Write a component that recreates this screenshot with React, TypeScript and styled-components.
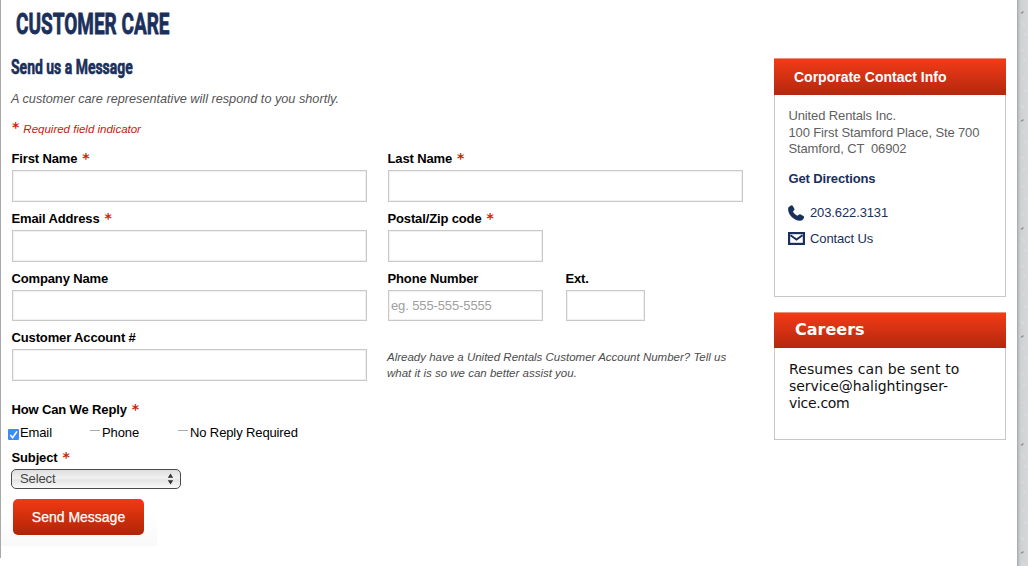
import React from "react";
import styled, { createGlobalStyle } from "styled-components";

const Global = createGlobalStyle`
  * { box-sizing: border-box; }
  body { margin: 0; background: #fff; font-family: "Liberation Sans", Arial, sans-serif; overflow: hidden; }
`;

const Page = styled.div`
  display: flex;
  width: 1028px;
  height: 566px;
  background: #fff;
`;
const LeftRule = styled.div`
  width: 1px;
  height: 558px;
  background: #a9a9a9;
`;
const Main = styled.main`
  width: 762px;
  height: 566px;
  display: flex;
  flex-direction: column;
  padding-left: 10px;
`;
const Side = styled.aside`
  width: 254px;
  padding: 58px 0 0 11px;
`;
const Texture = styled.div`
  flex: 1;
  height: 566px;
  display: flex;
  background: linear-gradient(90deg, #a6a7a8 0, #c4c5c7 2px, #d1d2d4 4px, #d5d6d8 11px);
`;

const Line = styled.div<{ $spacing?: number }>`
  white-space: pre;
  letter-spacing: ${(p) => p.$spacing ?? 0}px;
`;
const Title = styled.h1`
  margin: 6px 0 0 5px;
  height: 36px;
  font: 700 29px/36px Roboto, sans-serif;
  color: #1a2f5a;
  white-space: nowrap;
  transform: scaleX(0.655);
  transform-origin: 0 0;
  -webkit-text-stroke: 0.8px #1a2f5a;
`;
const Subtitle = styled.h2`
  margin: 13px 0 0;
  height: 24px;
  font: 700 20px/24px Roboto, sans-serif;
  color: #1a2f5a;
  white-space: nowrap;
  transform: scaleX(0.698);
  transform-origin: 0 0;
  -webkit-text-stroke: 0.6px #1a2f5a;
`;
const Intro = styled(Line)`
  margin-top: 12px;
  font: italic 12.7px/16px "Liberation Sans", sans-serif;
  color: #555;
`;
const Required = styled(Line)`
  margin: 13px 0 0 1px;
  height: 18px;
  display: flex;
  gap: 4px;
  font: italic 11.5px/18px "Liberation Sans", sans-serif;
  color: #c8190a;
`;
const Star = styled.span`
  font: 700 14px/15px "DejaVu Sans", sans-serif;
  letter-spacing: 0;
  color: #cc2209;
`;

const Fields = styled.div`
  display: grid;
  grid-template-columns: 355px 355px;
  grid-template-rows: 64px 60px 59px 60px;
  column-gap: 21px;
  padding-left: 1px;
`;
const Split = styled.div`
  display: flex;
  gap: 23px;
`;
const Field = styled.div<{ $width?: number }>`
  display: flex;
  flex-direction: column;
  justify-content: flex-end;
  width: ${(p) => p.$width ?? 355}px;
`;
const Label = styled.label`
  display: flex;
  gap: 5px;
  height: 15px;
  margin: 0 0 4px -0.5px;
  font: 700 13px/15px "Liberation Sans", sans-serif;
  letter-spacing: -0.14px;
  color: #000;
  white-space: nowrap;
`;
const Input = styled.input<{ $height?: number }>`
  display: block;
  width: 100%;
  height: ${(p) => p.$height ?? 32}px;
  padding: 0 2px;
  border: 1px solid #c9c9c9;
  box-shadow: inset 0 0 0 1px #f1f1f1;
  border-radius: 0;
  outline: none;
  background: #fff;
  font: 13px "Liberation Sans", sans-serif;
  letter-spacing: -0.12px;
  &::placeholder { color: #a0a0a0; opacity: 1; }
`;
const Hint = styled.div`
  padding-top: 28px;
  margin-left: -1px;
  font: italic 11.5px/16px "Liberation Sans", sans-serif;
  color: #4c4c4c;
`;

const ReplyLabel = styled(Label)`
  margin: 21px 0 0 0.5px;
`;
const Options = styled.div`
  display: flex;
  height: 17px;
  margin-top: 7px;
  margin-left: -3px;
`;
const Option = styled.label<{ $width: number }>`
  display: flex;
  width: ${(p) => p.$width}px;
  font: 13px/17px "Liberation Sans", sans-serif;
  letter-spacing: -0.12px;
  color: #000;
  white-space: nowrap;
`;
const Check = styled.svg`
  width: 11px;
  height: 11px;
  margin: 5px 1px 0 0;
`;
const Dash = styled.span`
  width: 10px;
  height: 10px;
  margin: 6px 2px 0 0;
  border-top: 1px solid #aaa;
`;
const SubjectLabel = styled(Label)`
  margin: 9px 0 0 0.5px;
`;
const Select = styled.div`
  display: flex;
  justify-content: space-between;
  align-items: center;
  width: 170px;
  height: 20px;
  margin: 4px 0 0;
  padding: 0 6px 1px 8px;
  border: 1.5px solid #4b4b4b;
  border-radius: 5px;
  background: linear-gradient(#ddd, #f1f1f1 45%, #e4e4e4 55%, #fafafa);
  font: 13px/17px "Liberation Sans", sans-serif;
  letter-spacing: -0.1px;
  color: #444;
`;
const Footer = styled.div`
  width: 156px;
  height: 57px;
  margin-left: -10px;
  padding: 10px 0 0 12px;
  background: linear-gradient(#fff 40%, #f9f9f9);
`;
const Send = styled.button`
  display: block;
  width: 131px;
  height: 36px;
  padding: 0;
  border: 0;
  border-radius: 5px;
  background: linear-gradient(#f13a13, #b02407);
  color: #fff;
  font: 14px/36px "Liberation Sans", sans-serif;
  -webkit-text-stroke: 0.25px #fff;
`;

const Card = styled.section<{ $height: number }>`
  width: 232px;
  height: ${(p) => p.$height}px;
  margin-bottom: 15px;
  border: 1px solid #c8c8c8;
  border-top: 0;
  background: #fff;
`;
const CardHead = styled.h3<{ $verdana?: boolean }>`
  height: ${(p) => (p.$verdana ? 36 : 37)}px;
  margin: 0 -1px;
  padding-left: ${(p) => (p.$verdana ? 21 : 20)}px;
  border: 1px solid #ee8f7c;
  border-width: 1px 0 0;
  background: linear-gradient(#f23b17, #b4270e);
  color: #fff;
  font: 700 ${(p) => (p.$verdana ? '16px/34px "DejaVu Sans"' : '14px/36px "Liberation Sans"')}, sans-serif;
  white-space: nowrap;
`;
const Address = styled.div`
  padding: 13px 0 0 13.5px;
  font: 13px/16.5px "Liberation Sans", sans-serif;
  color: #5f5f5f;
`;
const Directions = styled.a`
  display: block;
  margin: 13px 0 0 13.5px;
  font: 700 13px/16px "Liberation Sans", sans-serif;
  letter-spacing: -0.14px;
  color: #1a2f5a;
`;
const ContactRow = styled.a<{ $top: number }>`
  display: flex;
  align-items: center;
  gap: 5px;
  height: 18px;
  margin: ${(p) => p.$top}px 0 0 13px;
  font: 13px/18px "Liberation Sans", sans-serif;
  letter-spacing: -0.12px;
  color: #1a2f5a;
`;
const Resumes = styled.div`
  padding: 13px 0 0 14px;
  font: 14px/17px "DejaVu Sans", sans-serif;
  color: #111;
`;

function TextField({ label, required, width, height, placeholder }: {
  label: string; required?: boolean; width?: number; height?: number; placeholder?: string;
}) {
  return (
    <Field $width={width}>
      <Label>{label}{required && <Star>*</Star>}</Label>
      <Input $height={height} placeholder={placeholder} />
    </Field>
  );
}

export default function App() {
  return (
    <Page>
      <Global />
      <LeftRule />
      <Main>
        <Title>CUSTOMER CARE</Title>
        <Subtitle>Send us a Message</Subtitle>
        <Intro>A customer care representative will respond to you shortly.</Intro>
        <Required><Star>*</Star>Required field indicator</Required>
        <Fields>
          <TextField label="First Name" required />
          <TextField label="Last Name" required />
          <TextField label="Email Address" required />
          <TextField label="Postal/Zip code" required width={155} />
          <TextField label="Company Name" height={31} />
          <Split>
            <TextField label="Phone Number" width={155} height={31} placeholder="eg. 555-555-5555" />
            <TextField label="Ext." width={79} height={31} />
          </Split>
          <TextField label="Customer Account #" />
          <Hint>
            <Line>Already have a United Rentals Customer Account Number? Tell us</Line>
            <Line>what it is so we can better assist you.</Line>
          </Hint>
        </Fields>
        <ReplyLabel>How Can We Reply<Star>*</Star></ReplyLabel>
        <Options>
          <Option $width={82}>
            <Check viewBox="0 0 11 11">
              <rect width="11" height="11" rx="1" fill="#3b8df5" />
              <path d="M2.3 6l2.3 2.6L9 2.4" fill="none" stroke="#fff" strokeWidth="1.6" />
            </Check>
            Email
          </Option>
          <Option $width={88}><Dash />Phone</Option>
          <Option $width={130}><Dash />No Reply Required</Option>
        </Options>
        <SubjectLabel>Subject<Star>*</Star></SubjectLabel>
        <Select>
          Select
          <svg width="7" height="12" viewBox="0 0 7 12"><path d="M3.5 0.5L6.2 4.7H.8zM3.5 11.5L6.2 7.3H.8z" fill="#333" /></svg>
        </Select>
        <Footer><Send>Send Message</Send></Footer>
      </Main>
      <Side>
        <Card $height={239}>
          <CardHead>Corporate Contact Info</CardHead>
          <Address>
            <Line $spacing={-0.13}>United Rentals Inc.</Line>
            <Line $spacing={-0.13}>100 First Stamford Place, Ste 700</Line>
            <Line $spacing={-0.13}>Stamford, CT  06902</Line>
          </Address>
          <Directions>Get Directions</Directions>
          <ContactRow $top={17}>
            <svg width="17" height="16" viewBox="0 0 17 16">
              <path d="M.3 2.6L3.1.2 4.7.7 6.6 4.2 6.2 5.3 4.9 6.5C5.8 8.4 7.5 9.9 9.6 10.8L11 9.4 12.2 9.2 15.8 11.2 16.2 12.5C15.4 14.5 13.9 15.8 12 15.8 6 15.3.5 10.6.1 4.5Z" fill="#1a2f5a" />
            </svg>
            203.622.3131
          </ContactRow>
          <ContactRow $top={8}>
            <svg width="17" height="13" viewBox="0 0 17 13">
              <rect x="1.1" y="1.1" width="14.8" height="10.8" fill="#fff" stroke="#1a2f5a" strokeWidth="2.2" />
              <path d="M2.5 3.2L8.5 7.5L14.5 3.2" fill="none" stroke="#1a2f5a" strokeWidth="2" />
            </svg>
            Contact Us
          </ContactRow>
        </Card>
        <Card $height={128}>
          <CardHead $verdana>Careers</CardHead>
          <Resumes>
            <Line $spacing={0.1}>Resumes can be sent to</Line>
            <Line $spacing={-0.05}>service@halightingser-</Line>
            <Line $spacing={-0.3}>vice.com</Line>
          </Resumes>
        </Card>
      </Side>
      <Texture>
        <svg width="11" height="566">
          <defs>
            <pattern id="grain" width="11" height="108" y="11" patternUnits="userSpaceOnUse">
              <path d="M5 12l3 3M7 24l3-2M4 38l3 2M6 51l3-3M5 67l3 2M7 81l3-3M4 94l3 3" stroke="#dedfe2" strokeWidth="1.3" fill="none" opacity=".6" />
              <path d="M4 2.3L6.5 .6" stroke="#909194" strokeWidth="1.4" />
            </pattern>
          </defs>
          <rect width="11" height="566" fill="url(#grain)" />
        </svg>
      </Texture>
    </Page>
  );
}
